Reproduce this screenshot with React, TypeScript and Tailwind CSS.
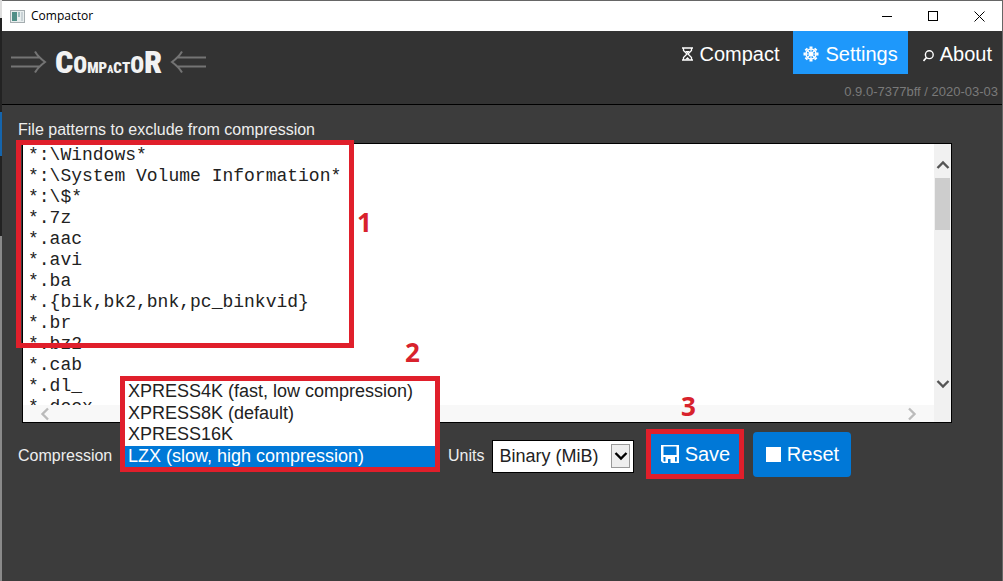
import React from "react";

const patterns = [
  "*:\\Windows*",
  "*:\\System Volume Information*",
  "*:\\$*",
  "*.7z",
  "*.aac",
  "*.avi",
  "*.ba",
  "*.{bik,bk2,bnk,pc_binkvid}",
  "*.br",
  "*.bz2",
  "*.cab",
  "*.dl_",
  "*.docx",
].join("\n");

const logoLetters = [
  { char: "C", size: "text-[32px]" },
  { char: "O", size: "text-[23px]" },
  { char: "M", size: "text-[15px]" },
  { char: "P", size: "text-[15px]" },
  { char: "A", size: "text-[10px]" },
  { char: "C", size: "text-[15px]" },
  { char: "T", size: "text-[15px]" },
  { char: "O", size: "text-[23px]" },
  { char: "R", size: "text-[32px]" },
];

function AppIcon() {
  return (
    <svg width="15" height="13" viewBox="0 0 15 13" className="shrink-0">
      <rect x="0.5" y="0.5" width="14" height="12" fill="#e8eeee" stroke="#a5adb0" />
      <rect x="2" y="2" width="5" height="9" fill="#4f8f87" />
      <rect x="8" y="2" width="2" height="5" fill="#9dbfc0" />
      <rect x="11" y="2" width="2" height="9" fill="#c9d2d6" />
    </svg>
  );
}

function Arrow({ flip }: { flip?: boolean }) {
  return (
    <svg
      width="37"
      height="24"
      viewBox="0 0 37 24"
      fill="none"
      stroke="#747474"
      strokeWidth="2"
      className={flip ? "shrink-0 rotate-180" : "shrink-0"}
    >
      <path d="M1 7.500H30M1 16.500H30M25 1.500C27 5 31 9 35 12C31 15 27 19 25 22.500" />
    </svg>
  );
}

function Hourglass() {
  return (
    <svg width="11" height="14" viewBox="0 0 11 14" fill="none" stroke="currentColor" strokeWidth="1.300">
      <path d="M0 1H11M0 13H11M1.500 1V3.500L5 7L1.500 10.500V13M9.500 1V3.500L6 7L9.500 10.500V13" />
      <path d="M3 4H8L5.500 6.500ZM3 12.500L5.500 10L8 12.500Z" fill="currentColor" stroke="none" />
    </svg>
  );
}

function Wheel() {
  return (
    <svg width="16" height="16" viewBox="0 0 16 16" fill="none" stroke="currentColor">
      <circle cx="8" cy="8" r="5" strokeWidth="1.600" />
      <circle cx="8" cy="8" r="1.400" fill="currentColor" />
      <path d="M8 2V14M2 8H14M4 4L12 12M12 4L4 12" strokeWidth="1.100" />
      <path
        d="M8 0.500V2.500M8 13.500V15.500M0.500 8H2.500M13.500 8H15.500M2.700 2.700L4 4M12 12L13.300 13.300M13.300 2.700L12 4M2.700 13.300L4 12"
        strokeWidth="3"
      />
    </svg>
  );
}

function Magnifier() {
  return (
    <svg width="11" height="12" viewBox="0 0 11 12" fill="none" stroke="currentColor" strokeWidth="1.400" className="mt-1">
      <circle cx="6.300" cy="4.700" r="3.900" />
      <path d="M3.500 7.500L0.500 11" strokeWidth="1.700" />
    </svg>
  );
}

function Floppy() {
  return (
    <svg width="18" height="18" viewBox="0 0 18 18" fill="currentColor" fillRule="evenodd">
      <path d="M0 0H18V18H2L0 16ZM2.500 1.500V10H15.500V1.500ZM2.500 12V16L3 16.500H4.500V12ZM7 14V18H9.500V14ZM14 12V16.500H15.800V12Z" />
    </svg>
  );
}

function Chevron({ className }: { className: string }) {
  return (
    <svg width="14" height="10" viewBox="0 0 14 10" fill="none" stroke="currentColor" strokeWidth="2.400" className={className}>
      <path d="M1.500 8L7 2.500L12.500 8" />
    </svg>
  );
}

function TitleBar() {
  return (
    <div className="flex h-[30px] items-center bg-white text-black">
      <div className="flex flex-1 items-center gap-1.5 pl-2">
        <AppIcon />
        <span className="font-['Open_Sans',sans-serif] text-[12px] leading-4">Compactor</span>
      </div>
      <button aria-label="Minimize" className="flex h-full w-[46px] items-center justify-center">
        <svg width="11" height="11" stroke="currentColor" fill="none"><path d="M0 5.500H10" /></svg>
      </button>
      <button aria-label="Maximize" className="flex h-full w-[46px] items-center justify-center">
        <svg width="11" height="11" stroke="currentColor" fill="none"><rect x="0.500" y="0.500" width="9" height="9" /></svg>
      </button>
      <button aria-label="Close" className="flex h-full w-[46px] items-center justify-center">
        <svg width="11" height="11" stroke="currentColor" fill="none"><path d="M0.500 0.500L10.500 10.500M10.500 0.500L0.500 10.500" /></svg>
      </button>
    </div>
  );
}

function Header() {
  return (
    <header className="flex h-[74px] justify-between border-b border-black bg-[#333]">
      <h1 className="flex h-[62px] items-center gap-2 pl-2">
        <Arrow />
        <span className="flex items-baseline font-['Roboto_Condensed','Open_Sans_Condensed',Roboto,sans-serif] leading-none font-black text-[#f2f2f2]">
          {logoLetters.map((l, i) => (
            <span key={i} className={l.size}>{l.char}</span>
          ))}
        </span>
        <Arrow flip />
      </h1>
      <div className="flex flex-col items-end">
        <nav className="flex text-[20px] text-white">
          <a href="#compact" className="flex h-[43px] items-center gap-1.5 px-3.5 pt-[3px]"><Hourglass />Compact</a>
          <a href="#settings" className="flex h-[43px] items-center gap-1.5 bg-[#1e98fb] px-2.5 pt-[3px]"><Wheel />Settings</a>
          <a href="#about" className="flex h-[43px] items-center gap-1.5 pt-[3px] pr-2.5 pl-[15px]"><Magnifier />About</a>
        </nav>
        <p className="pt-2 pr-1 text-[13px] leading-5 text-[#7a7a7a]">0.9.0-7377bff / 2020-03-03</p>
      </div>
    </header>
  );
}

function Mark({ children, className }: { children: React.ReactNode; className: string }) {
  return (
    <span className={`absolute font-['Open_Sans',sans-serif] text-[26px] leading-7 font-bold text-[#d8222c] ${className}`}>
      {children}
    </span>
  );
}

function PatternEditor() {
  return (
    <div className="relative mr-[34px] ml-1 border border-black bg-white">
      <div className="flex">
        <textarea
          id="patterns"
          wrap="off"
          spellCheck={false}
          defaultValue={patterns}
          className="block h-[261px] min-w-0 flex-1 resize-none overflow-hidden bg-white pt-px pl-[5px] font-['Liberation_Mono',monospace] text-[18px] leading-[21px] text-[#222] outline-none"
        />
        <div className="flex w-[17px] flex-col items-center bg-[#f1f1f1] pt-4 text-[#555]">
          <Chevron className="shrink-0" />
          <div className="mt-2 h-[52px] w-[15px] bg-[#cdcdcd]" />
          <Chevron className="mt-auto mb-4 shrink-0 rotate-180" />
        </div>
      </div>
      <div className="flex h-[17px] bg-[#f8f8f8]">
        <div className="flex flex-1 items-center justify-between pr-[15px] pl-[15px] text-[#bbb]">
          <Chevron className="-rotate-90" />
          <Chevron className="rotate-90" />
        </div>
        <div className="w-[17px] bg-[#f1f1f1]" />
      </div>
      <div className="pointer-events-none absolute -top-1 -left-[7px] h-[208px] w-[338px] border-5 border-[#e01f2b]" />
      <Mark className="top-16 left-[334px]">1</Mark>
      <Mark className="top-[194px] left-[382px]">2</Mark>
      <Mark className="top-[248px] left-[658px]">3</Mark>
    </div>
  );
}

function CompressionField() {
  const option = "h-[21px] px-[3px] py-0 leading-[21px] checked:bg-[linear-gradient(#0078d7,#0078d7)] checked:text-white";
  return (
    <div className="relative h-8 w-[320px]">
      <select
        id="compression"
        size={4}
        defaultValue="lzx"
        className="absolute bottom-0 left-0 h-[96px] w-full appearance-none overflow-hidden border-5 border-[#e01f2b] bg-white pt-px text-[18px] text-[#222] outline-none"
      >
        <option className={option} value="x4">XPRESS4K (fast, low compression)</option>
        <option className={option} value="x8">XPRESS8K (default)</option>
        <option className={option} value="x16">XPRESS16K</option>
        <option className={option} value="lzx">LZX (slow, high compression)</option>
      </select>
    </div>
  );
}

export default function App() {
  return (
    <div className="flex min-h-screen bg-[#3c3c3c] font-['Liberation_Sans',Arial,sans-serif]">
      <div className="flex w-0.5 shrink-0 flex-col bg-[#222]">
        <div className="h-[18px] bg-[#ddd]" />
        <div className="mt-[94px] h-11 bg-[#1565ad]" />
        <div className="mt-20 flex-1 bg-[#8a8a8a]" />
      </div>
      <div className="min-w-0 flex-1 border-t border-r border-[#666]">
        <TitleBar />
        <Header />
        <main className="px-4 pt-3.5">
          <label htmlFor="patterns" className="block pb-0.5 text-[16px] leading-[22px] text-[#eee]">
            File patterns to exclude from compression
          </label>
          <PatternEditor />
          <form className="flex items-center pt-1.5 text-[16px] text-[#eee]">
            <div className="flex items-center pt-1">
              <label htmlFor="compression" className="w-[102px]">Compression</label>
              <CompressionField />
              <label htmlFor="units" className="pl-2">Units</label>
              <div className="relative ml-2 h-[33px] w-[142px]">
                <select id="units" className="h-full w-full appearance-none border border-black bg-white pl-1.5 text-[18px] text-[#222]">
                  <option>Binary (MiB)</option>
                  <option>Decimal (MB)</option>
                </select>
                <span className="pointer-events-none absolute top-1 right-1 flex h-6 w-[19px] items-center justify-center border border-[#999] bg-[#eee] text-black">
                  <Chevron className="rotate-180" />
                </span>
              </div>
            </div>
            <button type="button" className="ml-3 flex h-[50px] w-[98px] items-center justify-center gap-1.5 border-5 border-[#e01f2b] bg-[#0078d7] text-[20px] text-white">
              <Floppy />Save
            </button>
            <button type="button" className="ml-[9px] flex h-[45px] w-[98px] items-center justify-center gap-1.5 rounded bg-[#0078d7] text-[20px] text-white">
              <span className="size-[15px] bg-white" />Reset
            </button>
          </form>
        </main>
      </div>
    </div>
  );
}
